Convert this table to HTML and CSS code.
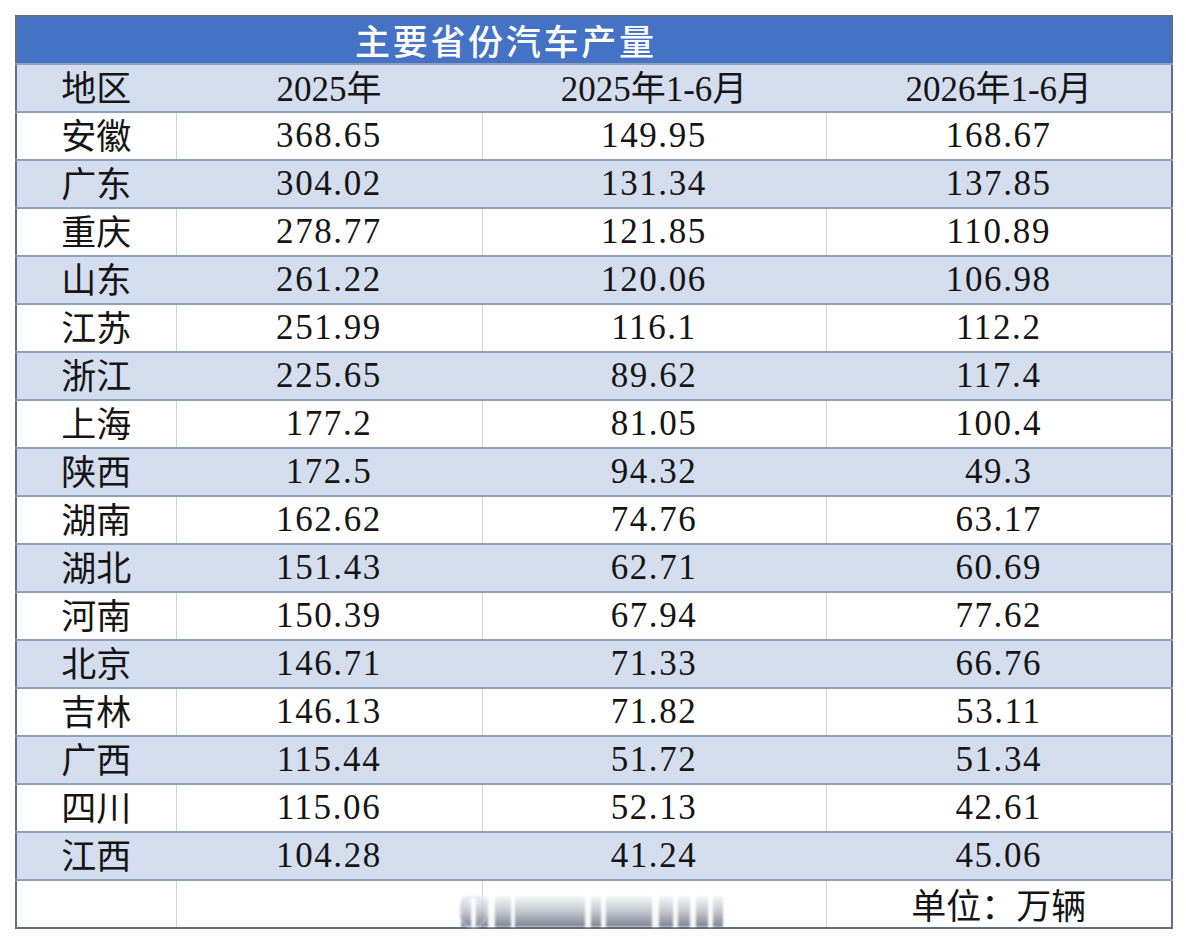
FILE: index.html
```html
<!DOCTYPE html>
<html lang="zh">
<head>
<meta charset="utf-8">
<link rel="stylesheet" href="styles.css">
</head>
<body>
<div class="wrap">
<table class="tbl">
<colgroup><col class="c1"><col class="c2"><col class="c3"><col class="c4"></colgroup>
<tr class="title"><td colspan="4"><span class="title-text">主要省份汽车产量</span></td></tr>
<tr class="shade head"><td class="name">地区</td><td><span class="num">2025</span>年</td><td><span class="num">2025</span>年<span class="num">1-6</span>月</td><td><span class="num">2026</span>年<span class="num">1-6</span>月</td></tr>
<tr><td class="name">安徽</td><td class="num">368.65</td><td class="num">149.95</td><td class="num">168.67</td></tr>
<tr class="shade"><td class="name">广东</td><td class="num">304.02</td><td class="num">131.34</td><td class="num">137.85</td></tr>
<tr><td class="name">重庆</td><td class="num">278.77</td><td class="num">121.85</td><td class="num">110.89</td></tr>
<tr class="shade"><td class="name">山东</td><td class="num">261.22</td><td class="num">120.06</td><td class="num">106.98</td></tr>
<tr><td class="name">江苏</td><td class="num">251.99</td><td class="num">116.1</td><td class="num">112.2</td></tr>
<tr class="shade"><td class="name">浙江</td><td class="num">225.65</td><td class="num">89.62</td><td class="num">117.4</td></tr>
<tr><td class="name">上海</td><td class="num">177.2</td><td class="num">81.05</td><td class="num">100.4</td></tr>
<tr class="shade"><td class="name">陕西</td><td class="num">172.5</td><td class="num">94.32</td><td class="num">49.3</td></tr>
<tr><td class="name">湖南</td><td class="num">162.62</td><td class="num">74.76</td><td class="num">63.17</td></tr>
<tr class="shade"><td class="name">湖北</td><td class="num">151.43</td><td class="num">62.71</td><td class="num">60.69</td></tr>
<tr><td class="name">河南</td><td class="num">150.39</td><td class="num">67.94</td><td class="num">77.62</td></tr>
<tr class="shade"><td class="name">北京</td><td class="num">146.71</td><td class="num">71.33</td><td class="num">66.76</td></tr>
<tr><td class="name">吉林</td><td class="num">146.13</td><td class="num">71.82</td><td class="num">53.11</td></tr>
<tr class="shade"><td class="name">广西</td><td class="num">115.44</td><td class="num">51.72</td><td class="num">51.34</td></tr>
<tr><td class="name">四川</td><td class="num">115.06</td><td class="num">52.13</td><td class="num">42.61</td></tr>
<tr class="shade"><td class="name">江西</td><td class="num">104.28</td><td class="num">41.24</td><td class="num">45.06</td></tr>
<tr class="foot"><td></td><td></td><td></td><td>单位：万辆</td></tr>
</table>
<div class="watermark" aria-hidden="true">
<span class="ring"></span>
<i class="b w10"></i><i class="g w5"></i><i class="b w12"></i><i class="g w7"></i><i class="b w16"></i><i class="g w4"></i><i class="b w70"></i><i class="g w6"></i><i class="b w10"></i><i class="g w5"></i><i class="b w46"></i><i class="g w7"></i><i class="b w14"></i><i class="g w5"></i><i class="b w12"></i><i class="g w6"></i><i class="b w12"></i><i class="g w5"></i><i class="b w10"></i>
</div>
</div>
</body>
</html>
```

FILE: styles.css
```css
html, body {
  margin: 0;
  padding: 0;
  background: #ffffff;
}
body {
  font-family: "Liberation Serif", "Noto Sans CJK SC", serif;
  color: #151515;
}
.wrap {
  position: relative;
  padding: 15px 0 0 15px;
  width: 1160px;
}
.tbl {
  border-collapse: collapse;
  table-layout: fixed;
  width: 1156px;
  border: 2px solid #5f6f86;
}
.c1 { width: 160px; }
.c2 { width: 306px; }
.c3 { width: 344px; }
.c4 { width: 346px; }
.tbl td {
  height: 46px;
  padding: 0;
  text-align: center;
  vertical-align: middle;
  font-size: 35px;
  line-height: 1.1;
  font-family: "Noto Sans CJK SC", sans-serif;
  font-weight: 400;
  border-top: 2px solid #8fa1bc;
  border-left: 1px solid #d6d6d6;
  white-space: nowrap;
}
.tbl td.name {
  padding-bottom: 4px;
  height: 42px;
}
.tbl td.num, .tbl .num {
  font-family: "Liberation Serif", serif;
  letter-spacing: 1.6px;
}
.tbl .head .num {
  letter-spacing: 0;
}
.tbl tr.shade td {
  background: #d4ddee;
  border-left-color: #d4ddee;
}
.tbl tr.title td {
  background: #4472c4;
  border-top: none;
  text-align: left;
  height: 46px;
}
.title-text {
  display: inline-block;
  padding-left: 338px;
  color: #ffffff;
  font-size: 35px;
  letter-spacing: 2.7px;
  font-weight: 500;
}
.tbl tr.foot td {
  background: #ffffff;
}
.watermark {
  position: absolute;
  left: 461px;
  top: 896px;
  width: 268px;
  height: 31px;
  display: flex;
  align-items: stretch;
  opacity: 0.8;
  filter: blur(0.8px);
}
.watermark .ring {
  position: absolute;
  left: -2px;
  top: 0;
  width: 26px;
  height: 30px;
  border: 1px solid #c9ced8;
  border-radius: 50%;
}
.watermark i {
  display: block;
  height: 100%;
}
.watermark .b {
  background: linear-gradient(to bottom, #f4f5f7 0%, #b4bac5 50%, #5d6576 100%);
}
.watermark .g {
  background: linear-gradient(to bottom, #ffffff 0%, #f0f2f5 100%);
}
.w4 { width: 4px; }
.w5 { width: 5px; }
.w6 { width: 6px; }
.w7 { width: 7px; }
.w10 { width: 10px; }
.w12 { width: 12px; }
.w14 { width: 14px; }
.w16 { width: 16px; }
.w46 { width: 46px; }
.w70 { width: 70px; }
```
